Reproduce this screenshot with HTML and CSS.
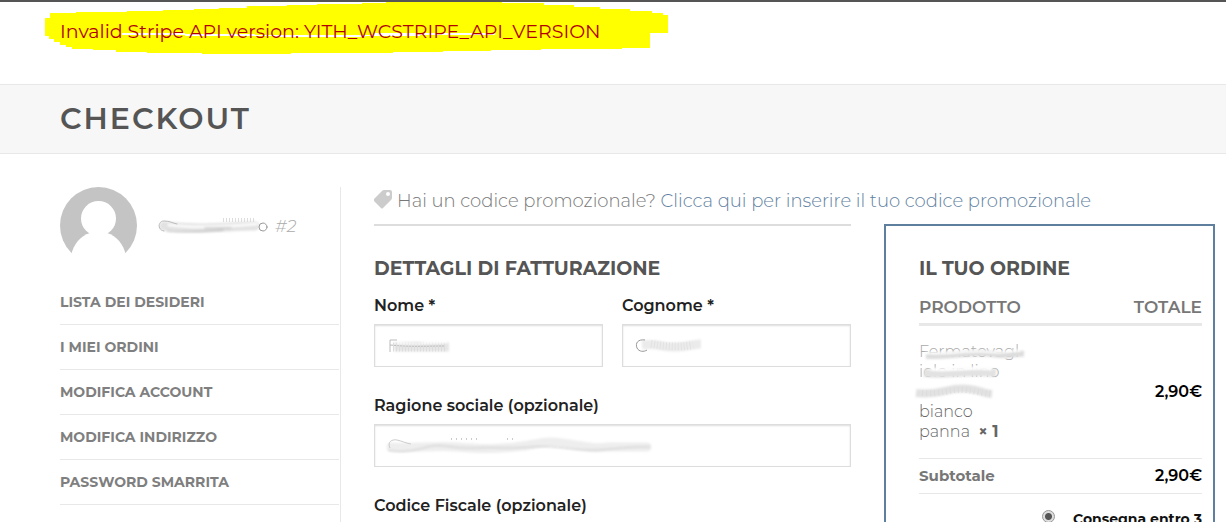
FILE: index.html
```html
<!DOCTYPE html>
<html lang="it">
<head>
<meta charset="utf-8">
<meta name="viewport" content="width=device-width, initial-scale=1">
<title>Checkout</title>
<link rel="stylesheet" href="styles.css">
</head>
<body>
<div class="notice">
  <svg class="marker" width="624" height="53" viewBox="0 0 624 53" shape-rendering="crispEdges" aria-hidden="true">
    <path fill="#ff0" d="M0 16H5V11H31V10H82V9H118V8H149V7H174V6H202V4H242V3H272V2H317V1H341V0H457V1H499V3H529V5H555V7H585V9H607V11H618V13H623V31H605V46H577V47H496V48H446V49H398V50H348V51H246V52H157V51H102V50H71V48H48V47H27V45H21V43H15V40H9V37H4V34H0Z"/>
    <path fill="#fff" d="M77 31H140V32H210V33H328V31H450V33H375V34H320V35H230V34H140V33H77Z"/>
  </svg>
  <p class="notice-text">Invalid Stripe API version: YITH_WCSTRIPE_API_VERSION</p>
</div>

<header class="title-band"><h1>Checkout</h1></header>

<div class="page">
  <aside class="account">
    <div class="user">
      <svg class="avatar" viewBox="0 0 77 77" role="img" aria-label="Avatar">
        <defs><clipPath id="disc"><circle cx="38.500" cy="38.500" r="38.500"/></clipPath></defs>
        <g clip-path="url(#disc)">
          <path fill="#c4c4c4" d="M0 0H77V66H0Z"/>
          <circle cx="38.500" cy="31.500" r="17.500" fill="#fff"/>
          <path fill="#fff" d="M30 46C20 49 14 57 11 68V77H66V68C63 57 57 49 47 46Z"/>
        </g>
      </svg>
      <div class="user-name">
        <svg width="112" height="20" viewBox="0 0 112 20" aria-hidden="true">
          <g fill="none" stroke-linecap="round">
            <path class="smear" stroke="#e2e2e2" stroke-width="9" d="M7 10C18 11 27 12 43 12S83 10 98 10"/>
            <path class="smear" stroke="#fafafa" stroke-width="3" d="M12 9C36 12 66 11 100 8"/>
            <path stroke="#bbb" d="M7 15C0 14 1 5 7 5C13 5 15 7 20 8"/>
            <path class="smear" stroke="#bbb" d="M10 15C28 17 45 15 66 14M48 12H74"/>
            <path stroke="#ddd" stroke-dasharray="1 2" stroke-width="4" stroke-linecap="butt" d="M66 4H98"/>
            <circle cx="106" cy="11" r="4" stroke="#999"/>
          </g>
        </svg>
        <em>#2</em>
      </div>
    </div>
    <nav class="menu">
      <a href="#">Lista dei desideri</a>
      <a href="#">I miei ordini</a>
      <a href="#">Modifica account</a>
      <a href="#">Modifica indirizzo</a>
      <a href="#">Password smarrita</a>
    </nav>
  </aside>

  <main class="checkout">
    <p class="promo">
      <svg class="tag" width="19" height="19" viewBox="0 0 19 19" aria-hidden="true"><path fill="#ccc" fill-rule="evenodd" d="M10 0H16Q18 0 18 2V8Q18 9 17 10L9 18Q8 19 7 18L0 11Q-1 10 0 9L8 1Q9 0 10 0ZM14 2A2 2 0 1 0 14 6A2 2 0 0 0 14 2Z"/></svg>
      <span>Hai un codice promozionale? <a href="#">Clicca qui per inserire il tuo codice promozionale</a></span>
    </p>

    <form class="billing">
      <h2>Dettagli di fatturazione</h2>
      <div class="fields">
        <div class="field">
          <label for="nome">Nome *</label>
          <div class="control"><input id="nome" type="text">
            <svg class="scribble" width="72" height="22" viewBox="0 0 72 22" aria-hidden="true">
              <path class="smear" stroke="#e6e6e6" stroke-width="9" d="M9 12H64"/>
              <path stroke="#bbb" fill="none" d="M5 17V5H12M5 10C26 12 39 11 60 11"/>
              <path stroke="#ddd" stroke-width="9" stroke-dasharray="1 2" d="M8 12H62"/>
              <path class="smear" stroke="#fff" stroke-width="2" d="M12 8C30 9 44 8 62 7"/>
            </svg>
          </div>
        </div>
        <div class="field">
          <label for="cognome">Cognome *</label>
          <div class="control"><input id="cognome" type="text">
            <svg class="scribble" width="76" height="22" viewBox="0 0 76 22" aria-hidden="true">
              <path class="smear" fill="none" stroke="#ebebeb" stroke-width="9" d="M9 10C26 8 29 13 44 12S61 9 68 9"/>
              <path fill="none" stroke="#999" d="M12 5C5 4 2 8 4 13C6 17 11 17 14 15"/>
              <path fill="none" stroke="#e2e2e2" stroke-width="8" stroke-dasharray="1 2" d="M18 9C31 11 42 13 60 10"/>
            </svg>
          </div>
        </div>
        <div class="field wide">
          <label for="ragione">Ragione sociale (opzionale)</label>
          <div class="control"><input id="ragione" type="text">
            <svg class="scribble" width="276" height="22" viewBox="0 0 276 22" aria-hidden="true">
              <path class="smear" fill="none" stroke="#eee" stroke-width="9" stroke-linecap="round" d="M6 12C28 14 48 10 72 12S106 14 130 12S155 5 177 8S207 14 223 12L262 12"/>
              <path class="smear" fill="none" stroke="#ccc" d="M3 15C15 18 28 16 42 12S68 14 88 13S126 14 145 12S181 14 200 15S240 11 265 12"/>
              <path fill="none" stroke="#ccc" d="M5 13C2 7 7 4 12 5S20 8 26 9"/>
              <path stroke="#ccc" stroke-width="2" stroke-dasharray="1 4" d="M66 4H94M122 4H132"/>
            </svg>
          </div>
        </div>
        <div class="field wide">
          <label for="fiscale">Codice Fiscale (opzionale)</label>
          <div class="control"><input id="fiscale" type="text"></div>
        </div>
      </div>
    </form>

    <section class="order">
      <h2>Il tuo ordine</h2>
      <table>
        <thead><tr><th>Prodotto</th><th>Totale</th></tr></thead>
        <tbody>
          <tr class="item">
            <td>
              <div class="product">
                <span class="faded">Fermatovagl</span>
                <span class="faded">iolo in lino</span>
                <span class="faded">&nbsp;</span>
                <span>bianco</span>
                <span>panna&nbsp; <strong>× 1</strong></span>
                <svg class="cover" width="116" height="62" viewBox="0 0 116 62" fill="none" aria-hidden="true">
                  <path class="smear" stroke="#ddd" stroke-width="6" d="M12 14C36 15 60 9 78 12S101 11 110 12"/>
                  <path class="smear" stroke="#fff" stroke-width="2" d="M11 11C32 13 55 8 74 10S94 8 106 9"/>
                  <path class="smear" stroke="#e2e2e2" stroke-width="8" d="M10 31C31 34 52 28 82 31"/>
                  <path class="smear" stroke="#fff" stroke-width="3" d="M16 27C34 30 59 24 78 27"/>
                  <path class="smear" stroke="#e2e2e2" stroke-width="8" d="M2 51C26 54 36 44 55 47S67 51 78 52"/>
                  <path stroke="#ddd" stroke-width="6" stroke-dasharray="1 3" d="M8 51C26 53 38 46 52 48S67 51 78 52"/>
                </svg>
              </div>
            </td>
            <td>2,90€</td>
          </tr>
          <tr class="subtotal"><th scope="row">Subtotale</th><td>2,90€</td></tr>
          <tr class="shipping"><td colspan="2"><div class="option"><input id="consegna" type="radio" name="spedizione" checked><label for="consegna">Consegna entro 3</label></div></td></tr>
        </tbody>
      </table>
    </section>
  </main>
</div>
</body>
</html>
```
FILE: styles.css
```css
* { box-sizing: border-box; }
html { overflow: hidden; }
body {
  margin: 0;
  border-top: 2px solid #555;
  background: #fff;
  color: #777;
  font-family: Montserrat, Inter, sans-serif;
  font-size: 16px;
  line-height: 20px;
}
h1, h2, p { margin: 0; }
a { color: inherit; text-decoration: none; }

.notice { position: relative; padding: 17px 60px 39px; }
.marker { position: absolute; left: 45px; top: 0; }
.notice-text {
  position: relative;
  color: #b20000;
  font-size: 19px;
  font-weight: 400;
  line-height: 26px;
}

.title-band {
  padding: 14px 60px;
  border: solid #e8e8e8;
  border-width: 1px 0;
  background: #f7f7f7;
}
h1 {
  color: #555;
  font-size: 30px;
  font-weight: 600;
  line-height: 40px;
  letter-spacing: 2px;
  text-transform: uppercase;
}

.page {
  display: grid;
  grid-template-columns: 281px minmax(0, 1fr);
  gap: 33px;
  padding: 33px 11px 0 60px;
}
.account { min-height: 480px; padding-right: 1px; border-right: 1px solid #e8e8e8; }
.user { display: flex; align-items: center; gap: 20px; }
.avatar { width: 77px; height: 77px; }
.user-name { display: flex; align-items: center; gap: 6px; color: #aaa; font-size: 17px; font-weight: 300; }
.menu { margin-top: 16px; }
.menu a {
  display: block;
  padding: 12px 0;
  border-bottom: 1px solid #e8e8e8;
  color: #7f7f7f;
  font-size: 14px;
  font-weight: 700;
  text-transform: uppercase;
}

.checkout {
  display: grid;
  grid-template-columns: minmax(0, 477fr) minmax(0, 331fr);
  grid-template-rows: auto 1fr;
  column-gap: 33px;
}
.promo {
  grid-column: 1 / -1;
  display: flex;
  gap: 4px;
  height: 37px;
  padding-top: 2px;
  font-size: 18px;
  font-weight: 300;
  line-height: 24px;
}
.tag { margin-top: 1px; }
.promo a { color: #5f7f9f; }
.billing { padding-top: 30px; border-top: 2px solid #ddd; }
h2 {
  color: #555;
  font-size: 19px;
  font-weight: 700;
  line-height: 25px;
  text-transform: uppercase;
}
.fields { display: grid; grid-template-columns: 1fr 1fr; gap: 29px 19px; margin-top: 15px; }
.wide { grid-column: 1 / -1; }
.field label { display: block; margin-bottom: 8px; color: #222; font-weight: 600; }
.control { position: relative; }
.control input {
  display: block;
  width: 100%;
  height: 43px;
  padding: 0 14px;
  border: 1px solid #ddd;
  background: #fff;
  box-shadow: inset 0 1px 2px #ddd;
  font: inherit;
}
.scribble { position: absolute; left: 11px; top: 11px; pointer-events: none; }
.smear { filter: blur(1px); }

.order { padding: 30px 11px 0 33px; border: 2px solid #5f7f9f; }
table { width: 100%; margin-top: 16px; border-collapse: collapse; }
th, td { padding: 0; text-align: left; }
th:last-child, td:last-child { text-align: right; }
thead th {
  padding-bottom: 6px;
  border-bottom: 3px solid #e8e8e8;
  color: #777;
  font-size: 17px;
  font-weight: 600;
  text-transform: uppercase;
}
.item td { padding: 16px 0; color: #000; font-weight: 600; }
.product { position: relative; display: flex; flex-direction: column; color: #666; font-weight: 300; }
.product strong { font-weight: 700; }
.product .faded { color: #aaa; }
.cover { position: absolute; left: -5px; top: 0; }
.subtotal { border: solid #e8e8e8; border-width: 1px 0; }
.subtotal th { padding: 7px 0; font-size: 15px; font-weight: 700; }
.subtotal td { color: #000; font-weight: 600; }
.option { display: flex; align-items: flex-start; justify-content: flex-end; gap: 16px; padding-top: 15px; color: #111; font-size: 14px; font-weight: 700; }
.option input {
  appearance: none;
  width: 13px;
  height: 13px;
  margin: 1px 2px 0 0;
  border: 1px solid #999;
  border-radius: 50%;
  background: radial-gradient(circle, #555 0 3px, #ddd 4px);
}
```
